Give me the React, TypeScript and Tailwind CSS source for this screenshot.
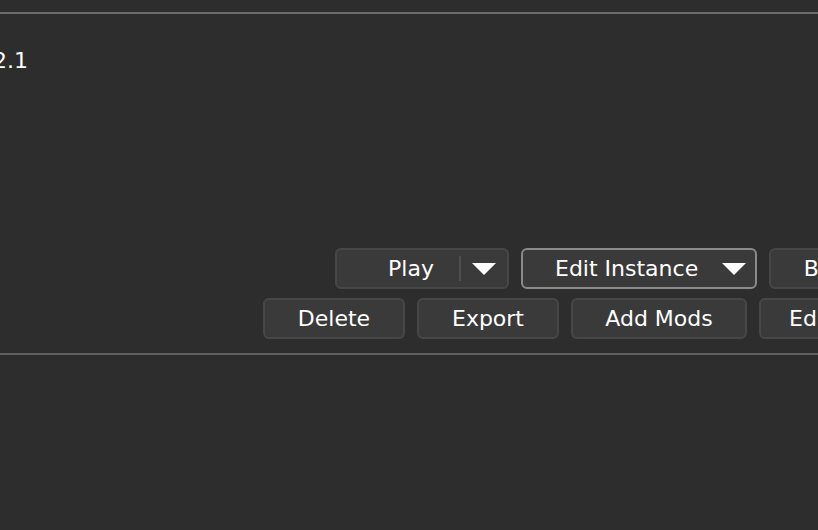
import React from "react";

const Caret = () => (
  <svg width="24" height="12" viewBox="0 0 24 12" className="shrink-0">
    <polygon points="0,0 24,0 12,12" fill="#ffffff" />
  </svg>
);

const Button = ({
  label,
  width,
  focused = false,
}: {
  label: string;
  width: string;
  focused?: boolean;
}) => (
  <div
    className={`${width} h-[41px] shrink-0 rounded-[6px] bg-[#3a3a3a] flex items-center justify-center ${
      focused ? "border-2 border-[#8a8a8a]" : "border-2 border-[#474747]"
    }`}
  >
    {label}
  </div>
);

const App = () => {
  return (
    <div
      className="w-[818px] h-[530px] overflow-hidden bg-[#2d2d2d] text-white text-[22px]"
      style={{ fontFamily: '"DejaVu Sans", sans-serif' }}
    >
      <div className="h-[12px]" />
      <div className="h-[2px] bg-[#6b6b6b]" />

      {/* version label, cut off at the left edge */}
      <div className="mt-[34px] -ml-[28px] leading-[26px]">2.2.1</div>

      <div className="mt-[174px] flex flex-col gap-[9px] whitespace-nowrap">
        {/* first row */}
        <div className="flex gap-[12px] pl-[335px]">
          {/* split play button */}
          <div className="w-[174px] h-[41px] shrink-0 rounded-[6px] bg-[#3a3a3a] border-2 border-[#474747] flex items-center">
            <div className="flex-1 flex items-center justify-center pl-[26px]">Play</div>
            <div className="w-[2px] h-[25px] bg-[#4f4f4f]" />
            <div className="w-[46px] flex items-center justify-center">
              <Caret />
            </div>
          </div>
          {/* focused dropdown */}
          <div className="w-[236px] h-[41px] shrink-0 rounded-[6px] bg-[#3a3a3a] border-2 border-[#8a8a8a] flex items-center pl-[32px] pr-[9px]">
            <span className="flex-1">Edit Instance</span>
            <Caret />
          </div>
          <Button label="Backup" width="w-[150px]" />
        </div>

        {/* second row */}
        <div className="flex gap-[12px] pl-[263px]">
          <Button label="Delete" width="w-[142px]" />
          <Button label="Export" width="w-[142px]" />
          <Button label="Add Mods" width="w-[176px]" />
          <div className="w-[150px] h-[41px] shrink-0 rounded-[6px] bg-[#3a3a3a] border-2 border-[#474747] flex items-center pl-[28px]">
            Edit
          </div>
        </div>
      </div>

      <div className="mt-[14px] h-[2px] bg-[#5f5f5f]" />
    </div>
  );
};

export default App;
